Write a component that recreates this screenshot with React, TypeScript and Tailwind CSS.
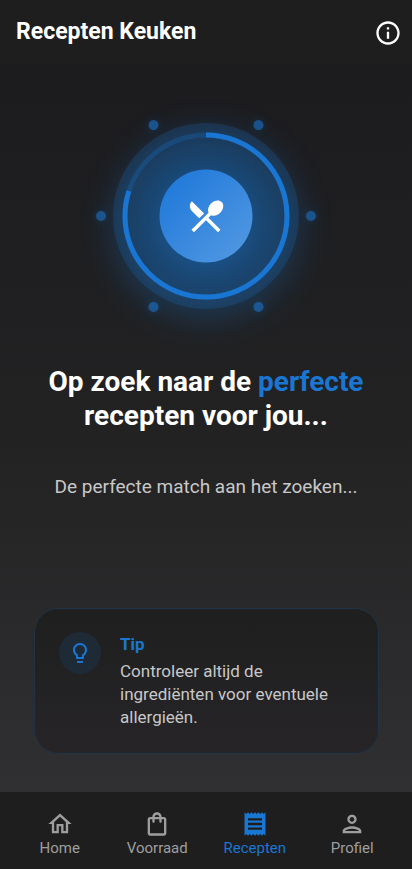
import {
  MdInfoOutline,
  MdOutlineHome,
  MdOutlineLightbulb,
  MdOutlinePerson,
  MdOutlineShoppingBag,
  MdReceipt,
  MdRestaurantMenu,
} from "react-icons/md";

const navItems = [
  { label: "Home", href: "#home", icon: MdOutlineHome, active: false },
  { label: "Voorraad", href: "#voorraad", icon: MdOutlineShoppingBag, active: false },
  { label: "Recepten", href: "#recepten", icon: MdReceipt, active: true },
  { label: "Profiel", href: "#profiel", icon: MdOutlinePerson, active: false },
];

const dotAngles = [0, 60, 120, 180, 240, 300];

function SearchLoader() {
  return (
    <svg viewBox="0 0 304 304" className="w-76 h-76 text-white" aria-hidden="true">
      <defs>
        <linearGradient id="core" x1="0" y1="0" x2="1" y2="1">
          <stop offset="0" stopColor="#1976d2" />
          <stop offset="0.15" stopColor="#237bda" />
          <stop offset="1" stopColor="#559ae3" />
        </linearGradient>
        <filter id="wideGlow" x="-50%" y="-50%" width="200%" height="200%">
          <feGaussianBlur stdDeviation="17" />
        </filter>
        <filter id="coreGlow" x="-60%" y="-60%" width="220%" height="220%">
          <feGaussianBlur stdDeviation="13" />
        </filter>
        <filter id="dotGlow" x="-150%" y="-150%" width="400%" height="400%">
          <feGaussianBlur stdDeviation="4" />
        </filter>
      </defs>

      {/* Glow and outer disc */}
      <circle cx="152" cy="161" r="93" fill="#1976d2" opacity="0.3" filter="url(#wideGlow)" />
      <circle cx="152" cy="152" r="93" fill="#1976d2" opacity="0.2" />

      {/* Progress ring */}
      <circle cx="152" cy="152" r="81" fill="none" stroke="#1976d2" strokeOpacity="0.25" strokeWidth="5" />
      <circle
        cx="152"
        cy="152"
        r="81"
        fill="none"
        stroke="#1976d2"
        strokeWidth="5"
        pathLength={100}
        strokeDasharray="80 20"
        transform="rotate(-90 152 152)"
      />

      {/* Orbiting dots */}
      {dotAngles.map((angle) => (
        <g key={angle} transform={`rotate(${angle} 152 152)`}>
          <circle cx="257" cy="152" r="5" fill="#1976d2" opacity="0.25" filter="url(#dotGlow)" />
          <circle cx="257" cy="152" r="5" fill="#1976d2" opacity="0.55" />
        </g>
      ))}

      {/* Core */}
      <circle cx="152" cy="158" r="47" fill="#1976d2" opacity="0.35" filter="url(#coreGlow)" />
      <circle cx="152" cy="152" r="46.5" fill="url(#core)" />
      <MdRestaurantMenu x={131} y={131} size={42} />
    </svg>
  );
}

export default function App() {
  return (
    <div className="min-h-screen flex flex-col bg-[#1e1e1e] font-['Roboto',sans-serif]">
      {/* Top Bar */}
      <header className="h-16 flex items-center justify-between pt-px pl-4 pr-[10px]">
        <h1 className="text-[23px] font-bold text-white">Recepten Keuken</h1>
        <button type="button" aria-label="Informatie" className="text-white">
          <MdInfoOutline className="w-7 h-7" />
        </button>
      </header>

      {/* Main */}
      <main className="flex-1 flex flex-col items-center bg-linear-to-b from-[#1c1b1e] via-[#222223] to-[#302f31]">
        <SearchLoader />

        <h2 className="-mt-[3px] px-8 text-center text-[28px] leading-[34px] font-bold text-white">
          Op zoek naar de <span className="text-[#1976d2]">perfecte</span>
          <br />
          recepten voor jou...
        </h2>
        <p className="mt-10 text-center text-[19px] leading-7 text-[#c8c8c8]">
          De perfecte match aan het zoeken...
        </p>

        <div className="w-full mt-auto pl-[34px] pr-[33px] pb-[38px]">
          <section className="flex items-start gap-[19px] rounded-3xl border border-[#1f3349] bg-linear-to-b from-[#1f1f1f] to-[#262427] px-6 pt-[23px] pb-6">
            <div className="w-[42px] h-[42px] shrink-0 rounded-full bg-[#1e2a36] flex items-center justify-center text-[#1976d2]">
              <MdOutlineLightbulb className="w-6 h-6" />
            </div>
            <div>
              <h3 className="text-[17px] leading-6 font-bold text-[#1976d2]">Tip</h3>
              <p className="mt-1 text-[17px] leading-[23px] text-[#c8c8c8]">
                Controleer altijd de ingrediënten voor eventuele allergieën.
              </p>
            </div>
          </section>
        </div>
      </main>

      {/* Bottom Navigation */}
      <nav className="h-[77px] px-[11px] flex">
        {navItems.map(({ label, href, icon: Icon, active }) => (
          <a
            key={label}
            href={href}
            aria-current={active ? "page" : undefined}
            className={`flex-1 flex flex-col items-center pt-[18px] text-[15px] leading-5 ${
              active ? "text-[#1976d2]" : "text-[#9e9e9e]"
            }`}
          >
            <Icon className="w-7 h-7" />
            {label}
          </a>
        ))}
      </nav>
    </div>
  );
}
